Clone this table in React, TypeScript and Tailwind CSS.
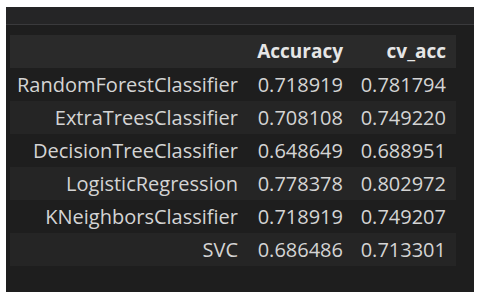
import React from 'react';

const rows = [
  { name: 'RandomForestClassifier', acc: '0.718919', cv: '0.781794' },
  { name: 'ExtraTreesClassifier', acc: '0.708108', cv: '0.749220' },
  { name: 'DecisionTreeClassifier', acc: '0.648649', cv: '0.688951' },
  { name: 'LogisticRegression', acc: '0.778378', cv: '0.802972' },
  { name: 'KNeighborsClassifier', acc: '0.718919', cv: '0.749207' },
  { name: 'SVC', acc: '0.686486', cv: '0.713301' },
];

const App: React.FC = () => {
  return (
    <div className="w-[479px] h-[297px] bg-white pt-[7px] pl-[6px]">
      <div className="w-[468px] h-[285px] bg-[#1e1e1e] flex flex-col">
        {/* output header strip */}
        <div className="h-[18px] bg-[#252526] border-b border-[#3a3a3c]"></div>
        <div className="pl-[4px] pt-[10px]" style={{ fontFamily: '"Open Sans", sans-serif' }}>
          <table className="border-collapse text-[20px] text-[#d4d4d4]">
            <thead>
              <tr className="h-[33px] bg-[#2a2a2a]">
                <th className="w-[238px] pr-[10px]"></th>
                <th className="w-[105px] pr-[10px] text-right font-bold text-[19px] text-[#e6e6e6] leading-none">Accuracy</th>
                <th className="w-[103px] pr-[10px] text-right font-bold text-[19px] text-[#e6e6e6] leading-none">cv_acc</th>
              </tr>
            </thead>
            <tbody>
              {rows.map((r, i) => (
                <tr key={r.name} className={`h-[33px] ${i % 2 === 1 ? 'bg-[#252525]' : ''}`}>
                  <td className="pr-[10px] text-right leading-none">{r.name}</td>
                  <td className="pr-[10px] text-right leading-none">{r.acc}</td>
                  <td className="pr-[10px] text-right leading-none">{r.cv}</td>
                </tr>
              ))}
            </tbody>
          </table>
        </div>
      </div>
    </div>
  );
};

export default App;
